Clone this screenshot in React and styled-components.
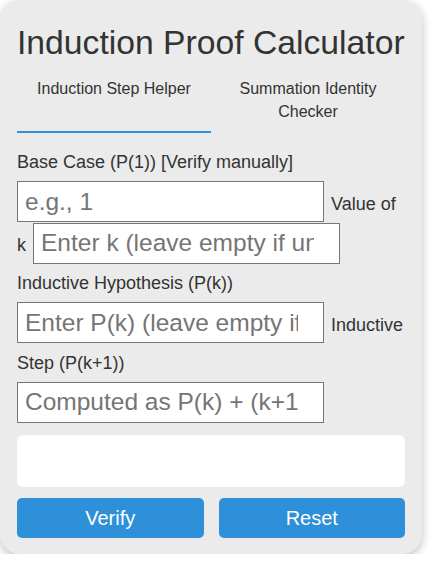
import React, { useState } from 'react';
import styled, { createGlobalStyle } from 'styled-components';

const GlobalStyle = createGlobalStyle`
  body {
    margin: 0;
    background: #ffffff;
    font-family: 'Liberation Sans', Arial, sans-serif;
  }
`;

const Card = styled.div`
  width: 422px;
  box-sizing: border-box;
  padding: 23px 17px 16px;
  background: #eaebea;
  border-radius: 20px;
  box-shadow: 0 3px 10px rgba(0, 0, 0, 0.25);
  color: #333;
`;

const Title = styled.h1`
  margin: 0 0 6px;
  font-size: 33.7px;
  font-weight: normal;
  color: #333;
  white-space: nowrap;
`;

const Tabs = styled.div`
  display: flex;
`;

// tab text sits at the top, so a div instead of a button
const Tab = styled.div`
  flex: 1;
  padding: 10px 10px 8px;
  border-bottom: 2px solid ${(p) => (p.active ? '#2d90d9' : 'transparent')};
  font-size: 16px;
  line-height: 22.6px;
  text-align: center;
  color: #333;
  cursor: pointer;
`;

const Form = styled.div`
  margin-top: 10px;
  font-size: 18px;
  line-height: 38px;
`;

const Label = styled.label`
  margin-right: 2px;
  color: #333;
`;

const Input = styled.input`
  width: 307px;
  height: 41px;
  box-sizing: border-box;
  margin: 0 2px 0 0;
  padding: 0 25px 0 7px;
  border: 1px solid #767676;
  border-radius: 0;
  background: #fff;
  font-family: inherit;
  font-size: 24.5px;
  color: #333;

  &::placeholder {
    color: #757575;
  }
`;

const Result = styled.div`
  margin-top: 12px;
  height: 52px;
  background: #fff;
  border-radius: 6px;
`;

const Buttons = styled.div`
  display: flex;
  gap: 15px;
  margin-top: 11px;
`;

const Button = styled.button`
  flex: 1;
  height: 40px;
  border: none;
  border-radius: 5px;
  background: #2d90d9;
  color: #fff;
  font-family: inherit;
  font-size: 20px;
  cursor: pointer;
`;

export default function App() {
  const [tab, setTab] = useState('step');
  const [base, setBase] = useState('');
  const [k, setK] = useState('');
  const [pk, setPk] = useState('');

  const reset = () => {
    setBase('');
    setK('');
    setPk('');
  };

  return (
    <>
      <GlobalStyle />
      <Card>
        <Title>Induction Proof Calculator</Title>
        <Tabs>
          <Tab active={tab === 'step'} onClick={() => setTab('step')}>
            Induction Step Helper
          </Tab>
          <Tab active={tab === 'sum'} onClick={() => setTab('sum')}>
            Summation Identity Checker
          </Tab>
        </Tabs>
        <Form>
          <Label>Base Case (P(1)) [Verify manually]</Label>{' '}
          <Input
            placeholder='e.g., 1'
            value={base}
            onChange={(e) => setBase(e.target.value)}
          />{' '}
          <Label>Value of k</Label>{' '}
          <Input
            placeholder='Enter k (leave empty if unknown)'
            value={k}
            onChange={(e) => setK(e.target.value)}
          />{' '}
          <Label>Inductive Hypothesis (P(k))</Label>{' '}
          <Input
            placeholder='Enter P(k) (leave empty if unknown)'
            value={pk}
            onChange={(e) => setPk(e.target.value)}
          />{' '}
          <Label>Inductive Step (P(k+1))</Label>{' '}
          <Input placeholder='Computed as P(k) + (k+1)' readOnly />
        </Form>
        <Result />
        <Buttons>
          <Button>Verify</Button>
          <Button onClick={reset}>Reset</Button>
        </Buttons>
      </Card>
    </>
  );
}
